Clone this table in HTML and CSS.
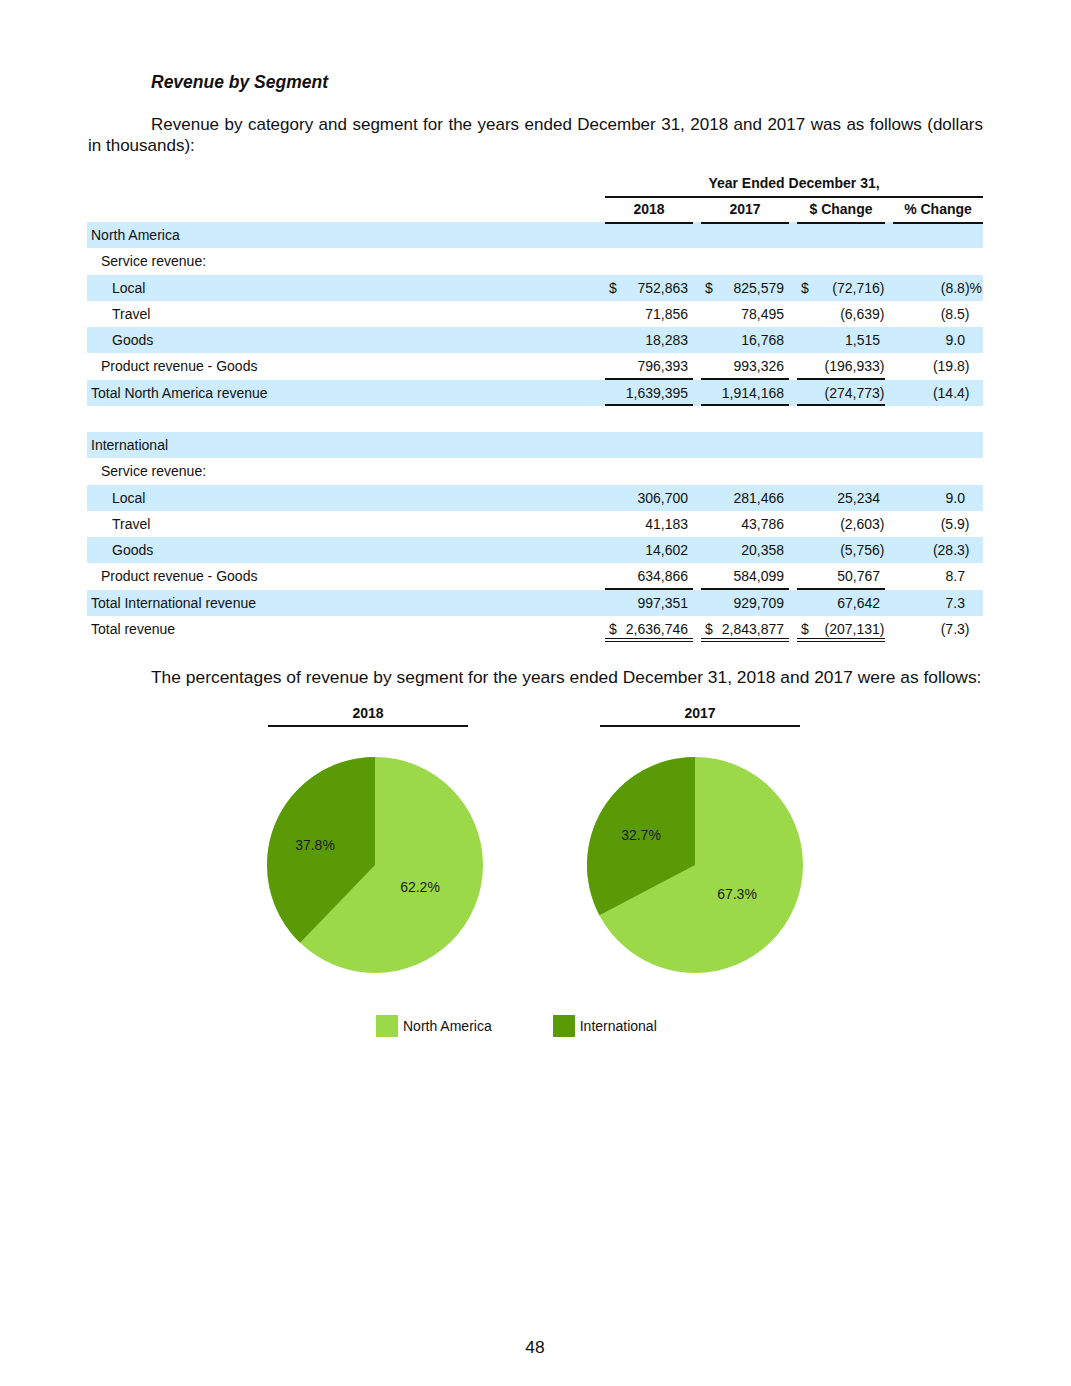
FILE: index.html
```html
<!DOCTYPE html>
<html lang="en">

<head>
    <meta charset="UTF-8">
    <meta name="viewport" content="width=device-width, initial-scale=1.0">
    <title>Revenue by Segment</title>
    <link rel="stylesheet" href="styles.css">
</head>

<body>
    <div class="page">
        <h2 class="section-title">Revenue by Segment</h2>
        <p class="intro">Revenue by category and segment for the years ended December 31, 2018 and 2017 was as follows (dollars in thousands):</p>

        <div class="fin-table">
            <div class="row head-top">
                <div></div>
                <div class="year-ended">Year Ended December 31,</div>
            </div>
            <div class="row head-cols">
                <div></div>
                <div class="col-head">2018</div>
                <div class="col-head">2017</div>
                <div class="col-head">$ Change</div>
                <div class="col-head">% Change</div>
            </div>

            <!-- North America -->
            <div class="row shade"><div class="label">North America</div></div>
            <div class="row"><div class="label indent-1">Service revenue:</div></div>
            <div class="row shade">
                <div class="label indent-2">Local</div>
                <div class="amt"><span>$</span><span>752,863</span></div>
                <div class="amt"><span>$</span><span>825,579</span></div>
                <div class="amt neg"><span>$</span><span>(72,716)</span></div>
                <div class="pct pct-sign">(8.8)%</div>
            </div>
            <div class="row">
                <div class="label indent-2">Travel</div>
                <div class="amt"><span>71,856</span></div>
                <div class="amt"><span>78,495</span></div>
                <div class="amt neg"><span>(6,639)</span></div>
                <div class="pct neg">(8.5)</div>
            </div>
            <div class="row shade">
                <div class="label indent-2">Goods</div>
                <div class="amt"><span>18,283</span></div>
                <div class="amt"><span>16,768</span></div>
                <div class="amt"><span>1,515</span></div>
                <div class="pct">9.0</div>
            </div>
            <div class="row">
                <div class="label indent-1">Product revenue - Goods</div>
                <div class="amt rule"><span>796,393</span></div>
                <div class="amt rule"><span>993,326</span></div>
                <div class="amt neg rule"><span>(196,933)</span></div>
                <div class="pct neg">(19.8)</div>
            </div>
            <div class="row shade">
                <div class="label">Total North America revenue</div>
                <div class="amt rule"><span>1,639,395</span></div>
                <div class="amt rule"><span>1,914,168</span></div>
                <div class="amt neg rule"><span>(274,773)</span></div>
                <div class="pct neg">(14.4)</div>
            </div>
            <div class="row"></div>

            <!-- International -->
            <div class="row shade"><div class="label">International</div></div>
            <div class="row"><div class="label indent-1">Service revenue:</div></div>
            <div class="row shade">
                <div class="label indent-2">Local</div>
                <div class="amt"><span>306,700</span></div>
                <div class="amt"><span>281,466</span></div>
                <div class="amt"><span>25,234</span></div>
                <div class="pct">9.0</div>
            </div>
            <div class="row">
                <div class="label indent-2">Travel</div>
                <div class="amt"><span>41,183</span></div>
                <div class="amt"><span>43,786</span></div>
                <div class="amt neg"><span>(2,603)</span></div>
                <div class="pct neg">(5.9)</div>
            </div>
            <div class="row shade">
                <div class="label indent-2">Goods</div>
                <div class="amt"><span>14,602</span></div>
                <div class="amt"><span>20,358</span></div>
                <div class="amt neg"><span>(5,756)</span></div>
                <div class="pct neg">(28.3)</div>
            </div>
            <div class="row">
                <div class="label indent-1">Product revenue - Goods</div>
                <div class="amt rule"><span>634,866</span></div>
                <div class="amt rule"><span>584,099</span></div>
                <div class="amt rule"><span>50,767</span></div>
                <div class="pct">8.7</div>
            </div>
            <div class="row shade">
                <div class="label">Total International revenue</div>
                <div class="amt"><span>997,351</span></div>
                <div class="amt"><span>929,709</span></div>
                <div class="amt"><span>67,642</span></div>
                <div class="pct">7.3</div>
            </div>
            <div class="row">
                <div class="label">Total revenue</div>
                <div class="amt double"><span>$</span><span>2,636,746</span></div>
                <div class="amt double"><span>$</span><span>2,843,877</span></div>
                <div class="amt neg double"><span>$</span><span>(207,131)</span></div>
                <div class="pct neg">(7.3)</div>
            </div>
        </div>

        <p class="lead">The percentages of revenue by segment for the years ended December 31, 2018 and 2017 were as follows:</p>

        <div class="charts">
            <div class="chart chart-2018">
                <div class="chart-head">2018</div>
                <svg width="216" height="216" viewBox="0 0 216 216">
                    <circle cx="108" cy="108" r="108" class="slice-na" />
                    <path d="M108,108 L108,0 A108,108 0 0,0 33.09,185.78 Z" class="slice-intl" />
                    <text x="48" y="88" class="slice-label">37.8%</text>
                    <text x="153" y="130" class="slice-label">62.2%</text>
                </svg>
            </div>
            <div class="chart chart-2017">
                <div class="chart-head">2017</div>
                <svg width="216" height="216" viewBox="0 0 216 216">
                    <circle cx="108" cy="108" r="108" class="slice-na" />
                    <path d="M108,108 L108,0 A108,108 0 0,0 12.39,158.23 Z" class="slice-intl" />
                    <text x="54" y="78" class="slice-label">32.7%</text>
                    <text x="150" y="137" class="slice-label">67.3%</text>
                </svg>
            </div>
        </div>

        <div class="legend">
            <div class="legend-item"><span class="swatch swatch-na"></span>North America</div>
            <div class="legend-item"><span class="swatch swatch-intl"></span>International</div>
        </div>

        <div class="page-number">48</div>
    </div>
</body>

</html>
```

FILE: styles.css
```css
body {
    font-family: "Liberation Sans", Arial, sans-serif;
    margin: 0;
    padding: 0;
    background-color: #fff;
    color: #111;
}

.page {
    width: 896px;
    margin-left: 87px;
    padding-top: 72px;
}

.section-title {
    margin: 0 0 0 64px;
    font-size: 17.5px;
    font-style: italic;
    font-weight: bold;
    line-height: 21px;
}

.intro {
    margin: 21px 0 0 1px;
    font-size: 17px;
    line-height: 21px;
    text-indent: 63px;
    text-align: justify;
}

/* table */

.fin-table {
    margin-top: 14px;
    font-size: 14px;
}

.row {
    display: grid;
    grid-template-columns: 510px 88px 88px 88px 90px;
    column-gap: 8px;
    height: 26.25px;
    line-height: 26.25px;
}

.shade {
    background-color: #cdecfd;
}

.head-top {
    height: 26px;
    line-height: 26px;
}

.year-ended {
    grid-column: 2 / 6;
    text-align: center;
    font-weight: bold;
    border-bottom: 2px solid #111;
}

.head-cols {
    height: 26px;
    line-height: 26px;
}

.col-head {
    text-align: center;
    font-weight: bold;
    border-bottom: 2px solid #111;
}

.label {
    padding-left: 4px;
}

.indent-1 {
    padding-left: 14px;
}

.indent-2 {
    padding-left: 25px;
}

.amt {
    display: flex;
    padding: 0 5px 0 4px;
}

.amt span:last-child {
    margin-left: auto;
}

.amt.neg {
    padding-right: 0.5px;
}

.pct {
    text-align: right;
    padding-right: 18px;
}

.pct.neg {
    padding-right: 13.5px;
}

.pct.pct-sign {
    padding-right: 1px;
}

.rule {
    box-shadow: inset 0 -2px 0 #111;
}

.double {
    box-shadow: inset 0 -1px 0 #111, inset 0 -3px 0 #fff, inset 0 -4px 0 #111;
}

.lead {
    margin: 25px 0 0 64px;
    font-size: 17.4px;
    line-height: 21px;
    white-space: nowrap;
}

/* charts */

.charts {
    display: flex;
    gap: 132px;
    margin: 15px 0 0 181px;
}

.chart {
    width: 200px;
}

.chart-head {
    text-align: center;
    font-size: 14px;
    font-weight: bold;
    line-height: 20px;
    padding-bottom: 2px;
    border-bottom: 2px solid #111;
}

.chart svg {
    display: block;
    margin-top: 30px;
}

.chart-2018 svg {
    margin-left: -1px;
}

.chart-2017 svg {
    margin-left: -13px;
}

.slice-na {
    fill: #9bd948;
}

.slice-intl {
    fill: #5b9a07;
}

.slice-label {
    font-family: "Liberation Sans", Arial, sans-serif;
    font-size: 14px;
    fill: #1a1a1a;
    text-anchor: middle;
    dominant-baseline: central;
}

.legend {
    display: flex;
    gap: 61px;
    margin: 42px 0 0 289px;
    font-size: 14px;
}

.legend-item {
    display: flex;
    align-items: center;
    gap: 5px;
    line-height: 22px;
}

.swatch {
    width: 22px;
    height: 22px;
}

.swatch-na {
    background-color: #9bd948;
}

.swatch-intl {
    background-color: #5b9a07;
}

.page-number {
    margin-top: 300px;
    text-align: center;
    font-size: 17.4px;
    line-height: 20px;
}
```
